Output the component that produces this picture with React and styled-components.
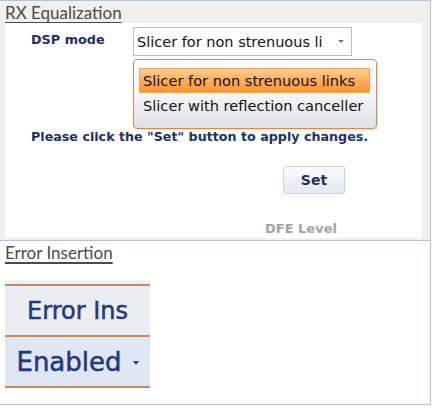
import React from "react";
import styled, { createGlobalStyle } from "styled-components";

const Global = createGlobalStyle`
  html, body { margin: 0; padding: 0; background: #ffffff; }
  body { width: 433px; height: 409px; overflow: hidden; }
`;

const Page = styled.div`
  width: 433px;
  display: flex;
  flex-direction: column;
`;

const Section = styled.section`
  box-sizing: border-box;
  width: 431px;
  height: ${(p) => p.$h}px;
  background: ${(p) => p.$bg};
  border-top: ${(p) => (p.$top ? "1px solid #b7c2d9" : "none")};
  border-right: 1px solid #b7c2d9;
  border-bottom: 1px solid #b7c2d9;
  display: flex;
  flex-direction: column;
  padding: 0 0 0 5px;
`;

const SectionTitle = styled.div`
  font-family: Lato, "Open Sans", "Liberation Sans", sans-serif;
  font-size: 17px;
  line-height: 24px;
  height: 22px;
  color: #4a4a4a;
  text-decoration: underline;
  text-decoration-thickness: 1.5px;
  text-underline-offset: 3px;
  align-self: flex-start;
`;

const Panel = styled.div`
  width: 417px;
  flex: 1;
  margin-bottom: 2px;
  background: #ffffff;
  display: flex;
  flex-direction: column;
  padding-left: 26px;
  box-sizing: border-box;
  font-family: "DejaVu Sans", "Liberation Sans", sans-serif;
`;

const Row = styled.div`
  display: flex;
  align-items: flex-start;
  margin-top: 4px;
`;

const Label = styled.div`
  width: 102px;
  font-weight: bold;
  font-size: 12.8px;
  color: #1f2e63;
  padding-top: 5px;
`;

const SelectWrap = styled.div`
  position: relative;
`;

const Select = styled.div`
  box-sizing: border-box;
  width: 219px;
  height: 29px;
  border: 1px solid #a9bfdc;
  background: #ffffff;
  display: flex;
  align-items: center;
  padding-left: 3px;
  font-size: 14.5px;
  color: #111;
  white-space: nowrap;
  overflow: hidden;
`;

const SelectText = styled.span`
  flex: 1;
  overflow: hidden;
`;

const Arrow = styled.span`
  flex: none;
  width: 0;
  height: 0;
  border-left: 3px solid transparent;
  border-right: 3px solid transparent;
  border-top: 3px solid #5877a8;
  margin: 0 7px 0 10px;
`;

const Menu = styled.div`
  position: absolute;
  left: 0;
  top: 32px;
  box-sizing: border-box;
  width: 244px;
  height: 70px;
  border: 1px solid #c9905e;
  border-radius: 4px;
  background: linear-gradient(180deg, #ffffff 0%, #f3f3f5 55%, #dfe0e5 100%);
  box-shadow: 1px 1px 2px rgba(0, 0, 0, 0.15);
  padding: 8px 6px 0 5px;
  display: flex;
  flex-direction: column;
`;

const MenuItem = styled.div`
  height: 25px;
  display: flex;
  align-items: center;
  padding-left: 3px;
  font-size: 14.6px;
  color: #111;
  white-space: nowrap;
  border: 1px solid ${(p) => (p.$active ? "#e9a35f" : "transparent")};
  background: ${(p) =>
    p.$active ? "linear-gradient(180deg, #ffcf94 0%, #ffae5a 50%, #f89438 100%)" : "transparent"};
  box-sizing: border-box;
`;

const Note = styled.div`
  margin-top: 73px;
  font-weight: bold;
  font-size: 12.7px;
  color: #1f2e63;
  white-space: nowrap;
`;

const SetButton = styled.button`
  margin: 22px 0 0 252px;
  box-sizing: border-box;
  width: 62px;
  height: 28px;
  border: 1px solid #c7d2e2;
  border-radius: 2px;
  background: linear-gradient(180deg, #fbfcfe 0%, #eef2f8 50%, #e3e9f2 100%);
  font-family: "DejaVu Sans", sans-serif;
  font-weight: bold;
  font-size: 14px;
  color: #1f2e63;
  padding: 0;
`;

const Faded = styled.div`
  margin: 27px 0 0 234px;
  font-weight: bold;
  font-size: 13px;
  color: #a3a3a3;
`;

const Table = styled.div`
  margin-top: 17px;
  width: 145px;
  display: flex;
  flex-direction: column;
  font-family: "DejaVu Sans", "Liberation Sans", sans-serif;
  background: #eef0f4;
  padding-top: 4px;
`;

const Cell = styled.div`
  box-sizing: border-box;
  height: ${(p) => p.$h}px;
  border-top: 2px solid #c38c62;
  border-bottom: ${(p) => (p.$last ? "2px solid #c38c62" : "none")};
  background: ${(p) => p.$bg};
  display: flex;
  align-items: center;
  justify-content: center;
  color: #24387a;
  font-size: ${(p) => p.$size}px;
  -webkit-text-stroke: 0.5px #24387a;
  white-space: nowrap;
`;

const CellArrow = styled.span`
  width: 0;
  height: 0;
  border-left: 3.5px solid transparent;
  border-right: 3.5px solid transparent;
  border-top: 4px solid #2a3c78;
  margin-left: 11px;
  margin-top: 2px;
`;

export default function App() {
  return (
    <Page>
      <Global />
      <Section $h={241} $bg="#f0f0f0" $top>
        <SectionTitle>RX Equalization</SectionTitle>
        <Panel>
          <Row>
            <Label>DSP mode</Label>
            <SelectWrap>
              <Select>
                <SelectText>Slicer for non strenuous li</SelectText>
                <Arrow />
              </Select>
              <Menu>
                <MenuItem $active>Slicer for non strenuous links</MenuItem>
                <MenuItem>Slicer with reflection canceller</MenuItem>
              </Menu>
            </SelectWrap>
          </Row>
          <Note>Please click the "Set" button to apply changes.</Note>
          <SetButton>Set</SetButton>
          <Faded>DFE Level</Faded>
        </Panel>
      </Section>
      <Section $h={164} $bg="#ffffff">
        <SectionTitle>Error Insertion</SectionTitle>
        <Table>
          <Cell $h={51} $bg="#eaedf2" $size={24}>
            Error Ins
          </Cell>
          <Cell $h={53} $bg="#dfe7f4" $size={26} $last>
            Enabled
            <CellArrow />
          </Cell>
        </Table>
      </Section>
    </Page>
  );
}
